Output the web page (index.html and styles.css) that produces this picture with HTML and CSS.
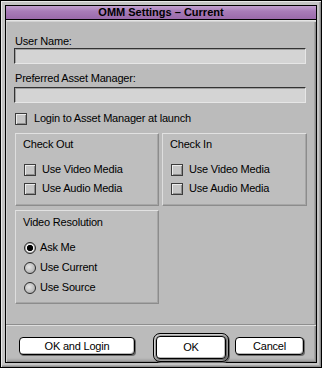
FILE: index.html
```html
<!DOCTYPE html>
<html>
<head>
<meta charset="utf-8">
<link rel="stylesheet" href="styles.css">
</head>
<body>
<div class="window">
  <div class="inner">
    <div class="titlebar"><span class="title">OMM Settings – Current</span></div>
    <div class="content">
      <div class="main">
        <div class="label first">User Name:</div>
        <div class="field"></div>
        <div class="label second">Preferred Asset Manager:</div>
        <div class="field"></div>
        <div class="opt login"><span class="box"></span><span>Login to Asset Manager at launch</span></div>
        <div class="groups">
          <div class="group">
            <div class="gtitle">Check Out</div>
            <div class="opt g1"><span class="box"></span><span>Use Video Media</span></div>
            <div class="opt g2"><span class="box"></span><span>Use Audio Media</span></div>
          </div>
          <div class="group">
            <div class="gtitle">Check In</div>
            <div class="opt g1"><span class="box"></span><span>Use Video Media</span></div>
            <div class="opt g2"><span class="box"></span><span>Use Audio Media</span></div>
          </div>
          <div class="group tall">
            <div class="gtitle vt">Video Resolution</div>
            <div class="opt r1"><span class="radio on"></span><span>Ask Me</span></div>
            <div class="opt r2"><span class="radio"></span><span>Use Current</span></div>
            <div class="opt r2"><span class="radio"></span><span>Use Source</span></div>
          </div>
        </div>
      </div>
      <div class="footer">
        <div class="btn wide">OK and Login</div>
        <div class="ring"><div class="btn def">OK</div></div>
        <div class="btn cancel">Cancel</div>
      </div>
    </div>
  </div>
</div>
</body>
</html>
```
FILE: styles.css
```css
* { box-sizing: border-box; }
html, body { margin: 0; padding: 0; background: #fff; }
body {
  font-family: "Liberation Sans", Arial, sans-serif;
  font-size: 11px;
  letter-spacing: -0.2px;
  color: #000;
}
.window {
  width: 322px;
  height: 368px;
  border: 1px solid #000;
  background: #c4c4c4;
  padding: 4px;
  box-shadow: inset 1px 1px 0 #e8e8e8, inset -1px -1px 0 #8c8c8c, inset -2px -2px 0 #a8a8a8;
}
.inner {
  height: 100%;
  border: 1px solid #000;
  display: flex;
  flex-direction: column;
  background: #bbbbbb;
}
.titlebar {
  height: 14px;
  border-bottom: 1px solid #000;
  background: linear-gradient(#c2a0d0, #a87cb8 40%, #9a6aaa);
  display: flex;
  align-items: center;
  justify-content: center;
}
.title {
  font-weight: bold;
  font-size: 11px;
  letter-spacing: 0;
  line-height: 13px;
}
.content {
  flex: 1;
  display: flex;
  flex-direction: column;
  box-shadow: inset 0 1px 0 #e4e4e4, inset 0 2px 0 #d2d2d2, inset 1px 0 0 #cfcfcf, inset -1px -1px 0 #8a8a8a, inset -2px -2px 0 #a4a4a4, inset 0 -4px 2px -1px #a8a8a8;
}
.main {
  padding-left: 8px;
  height: 294px;
}
.label { line-height: 13px; height: 13px; padding-left: 1px; }
.label.first { margin-top: 15px; }
.label.second { margin-top: 8px; }
.field {
  width: 292px;
  height: 16px;
  background: #d4d4d4;
  border-top: 1px solid #333;
  border-left: 1px solid #333;
  border-right: 1px solid #e6e6e6;
  border-bottom: 1px solid #e6e6e6;
  box-shadow: inset 1px 1px 0 #a0a0a0;
}
.label.second + .field { margin-top: 2px; }
.opt {
  display: flex;
  align-items: center;
  height: 13px;
  line-height: 13px;
  white-space: nowrap;
}
.opt.login { margin-top: 9px; margin-left: 1px; }
.box {
  width: 12px;
  height: 12px;
  flex: none;
  border: 1px solid #3c3c3c;
  background: #c6c6c6;
  box-shadow: inset 1px 1px 0 #ececec, inset -1px -1px 0 #8e8e8e;
  margin-right: 7px;
}
.radio {
  width: 12px;
  height: 12px;
  flex: none;
  border: 1px solid #2a2a2a;
  border-radius: 50%;
  background: radial-gradient(circle at 40% 40%, #e6e6e6, #bcbcbc 60%, #9a9a9a);
  margin-right: 4px;
}
.radio.on {
  background: radial-gradient(circle, #000 0 2.8px, #f0f0f0 3.4px 4px, #b4b4b4 4.6px);
}
.groups {
  margin-top: 8px;
  margin-left: 1px;
  display: grid;
  grid-template-columns: 144px 145px;
  column-gap: 3px;
  row-gap: 4px;
}
.group {
  height: 73px;
  background: #bebebe;
  border: 1px solid;
  border-color: #e2e2e2 #8c8c8c #8c8c8c #dedede;
  box-shadow: inset -1px -1px 0 #a6a6a6;
  padding-left: 7px;
  padding-top: 4px;
}
.group.tall { height: 94px; }
.gtitle { line-height: 13px; height: 13px; }
.gtitle.vt { margin-top: 1px; }
.group .opt { padding-left: 1px; }
.group .box { margin-right: 6px; }
.opt.g1 { margin-top: 12px; }
.opt.g2 { margin-top: 6px; }
.opt.r1 { margin-top: 12px; }
.opt.r2 { margin-top: 7px; }
.footer {
  border-top: 1px solid #8e8e8e;
  box-shadow: inset 0 1px 0 #dedede;
  margin-top: 10px;
  padding-top: 8px;
  padding-left: 13px;
  display: flex;
  align-items: flex-start;
}
.btn {
  height: 18px;
  background: #fff;
  border: 1px solid #000;
  border-radius: 4px;
  box-shadow: 1px 1px 0 #6c6c6c, inset -1px -1px 0 #b8b8b8;
  display: flex;
  align-items: center;
  justify-content: center;
  line-height: 13px;
}
.btn.wide { width: 116px; margin-top: 4px; }
.ring {
  margin-left: 18px;
  width: 76px;
  height: 29px;
  border: 1px solid #000;
  border-radius: 7px;
  background: #9c9c9c;
  box-shadow: 1px 1px 0 #6c6c6c, inset 1px 1px 0 #d0d0d0;
  padding: 2px;
}
.btn.def { width: 100%; height: 23px; }
.btn.cancel { width: 69px; margin-left: 6px; margin-top: 4px; }
```
